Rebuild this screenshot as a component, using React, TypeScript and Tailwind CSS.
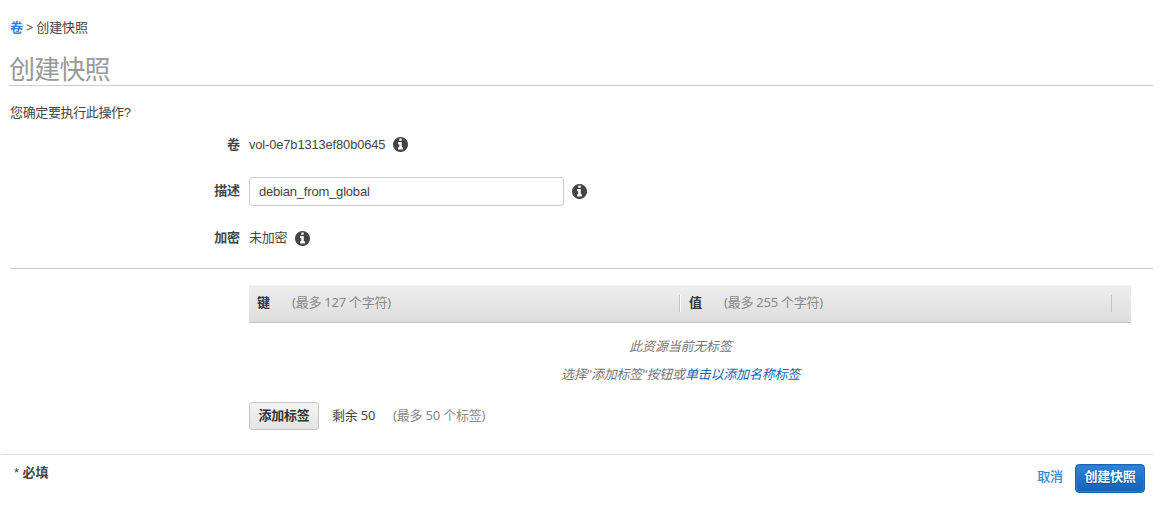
import React from "react";

const Info = () => (
  <svg viewBox="0 0 1536 1536" className="h-[15px] w-[15px] shrink-0 fill-[#444]" aria-hidden="true">
    <path d="M1024 1248v-160q0-14-9-23t-23-9h-96v-512q0-14-9-23t-23-9h-320q-14 0-23 9t-9 23v160q0 14 9 23t23 9h96v320h-96q-14 0-23 9t-9 23v160q0 14 9 23t23 9h448q14 0 23-9t9-23zM896 352v-160q0-14-9-23t-23-9h-192q-14 0-23 9t-9 23v160q0 14 9 23t23 9h192q14 0 23-9t9-23zM1536 768q0 209-103 385.5t-279.5 279.5-385.5 103-385.5-103-279.5-279.5-103-385.5 103-385.5 279.5-279.5 385.5-103 385.5 103 279.5 279.5 103 385.5z" />
  </svg>
);

function Field({ label, className, children }: { label: string; className: string; children: React.ReactNode }) {
  return (
    <div className={`flex items-center ${className}`}>
      <div className="w-[240px] shrink-0 text-right font-bold tracking-[-0.1px]">{label}</div>
      <div className="ml-[9px] flex items-center">{children}</div>
    </div>
  );
}

export default function App() {
  return (
    <div className="flex h-[515px] w-[1165px] flex-col overflow-hidden bg-white font-['Liberation_Sans','Noto_Sans_CJK_SC',sans-serif] text-[13px] leading-5 text-[#444]">
      <nav className="mt-[17px] flex h-5 items-center pl-[10px] tracking-[-0.1px]">
        <a className="pt-px font-bold text-[#2d7fe0]">卷</a>
        <span className="ml-[3px] font-['Noto_Sans','Noto_Sans_CJK_SC',sans-serif]">&gt;</span>
        <span className="ml-[3px] pt-px">创建快照</span>
      </nav>
      <h1 className="ml-[9px] mr-3 mt-[14px] h-[35px] border-b border-[#ccc] text-[26px] leading-[39px] tracking-[-0.8px] text-[#999]">
        创建快照
      </h1>
      <p className="mt-[17px] pl-[10px] tracking-[-0.36px]">您确定要执行此操作?</p>

      <Field label="卷" className="mt-[10px] h-[22px] pt-px">
        <span className="w-[144px] text-[12.9px] tracking-[-0.13px]">vol-0e7b1313ef80b0645</span>
        <Info />
      </Field>
      <div className="mt-[22px] flex h-[29px] items-center">
        <div className="w-[240px] shrink-0 pb-[2px] text-right font-bold tracking-[-0.1px]">描述</div>
        <input
          className="ml-[9px] mr-2 h-[29px] w-[315px] rounded-[3px] border border-[#ccc] bg-white px-[9px] tracking-[-0.2px] text-[#444] outline-none"
          defaultValue="debian_from_global"
        />
        <Info />
      </div>
      <Field label="加密" className="mt-[21px] h-[21px] pt-px">
        <span className="w-[46px] tracking-[-0.3px]">未加密</span>
        <Info />
      </Field>

      <div className="ml-[10px] mr-3 mt-[20px] h-px shrink-0 bg-[#ccc]" />

      <section className="ml-[249px] mt-4 w-[882px]">
        <div className="flex h-[38px] border-b border-[#c4c4c4] bg-linear-to-b from-[#eee] to-[#ddd] pt-[7px]">
          <div className="flex w-[430px] pl-2">
            <b className="w-[35px] pt-px text-[#333]">键</b>
            <span className="font-['Noto_Sans','Noto_Sans_CJK_SC',sans-serif] tracking-[-0.25px] text-[#888]">(最多 127 个字符)</span>
          </div>
          <div className="mt-[3px] h-[17px] w-[2px] border-l border-[#c4c4c4] bg-white" />
          <div className="flex w-[430px] pl-2">
            <b className="w-[35px] pt-px text-[#333]">值</b>
            <span className="font-['Noto_Sans','Noto_Sans_CJK_SC',sans-serif] tracking-[-0.25px] text-[#888]">(最多 255 个字符)</span>
          </div>
          <div className="mt-[3px] h-[17px] w-px bg-[#c4c4c4]" />
        </div>
        <div className="mr-[19px] mt-[10px] flex flex-col items-center text-[13px] italic leading-[28px] tracking-[-0.2px] text-[#777]">
          <p>此资源当前无标签</p>
          <p>
            选择"添加标签"按钮或<a className="text-[#1166bb]">单击以添加名称标签</a>
          </p>
        </div>
        <div className="mt-[13px] flex h-7 items-center">
          <button className="h-7 w-[70px] rounded-[3px] border border-[#c4c4c4] bg-linear-to-b from-[#f4f4f4] to-[#e5e5e5] pb-[1px] text-[13px] font-bold tracking-[-0.2px] text-[#333]">
            添加标签
          </button>
          <span className="ml-[13px] w-[61px] pb-[2px] font-['Noto_Sans','Noto_Sans_CJK_SC',sans-serif] tracking-[-0.2px]">剩余 50</span>
          <span className="pb-[2px] font-['Noto_Sans','Noto_Sans_CJK_SC',sans-serif] tracking-[-0.2px] text-[#888]">(最多 50 个标签)</span>
        </div>
      </section>

      <footer className="ml-px mr-3 mt-6 flex justify-between border-t border-[#ddd] pr-2">
        <span className="mt-[8px] pl-[13px] font-bold tracking-[-0.1px]"><span className="font-normal">*</span> 必填</span>
        <div className="mt-[9px] flex h-[29px] items-center">
          <a className="mr-3 pb-[3px] text-[#2d7fe0] tracking-[-0.1px] [-webkit-text-stroke:0.25px_#2d7fe0]">取消</a>
          <button className="h-[29px] w-[70px] rounded-[4px] border border-[#1763b4] bg-linear-to-b from-[#2d83db] to-[#1563b6] pb-[3px] font-bold tracking-[-0.2px] text-white shadow-[inset_0_0_0_1px_#2f7aca] [text-shadow:0_1px_1px_#0f4c8c]">
            创建快照
          </button>
        </div>
      </footer>
    </div>
  );
}
